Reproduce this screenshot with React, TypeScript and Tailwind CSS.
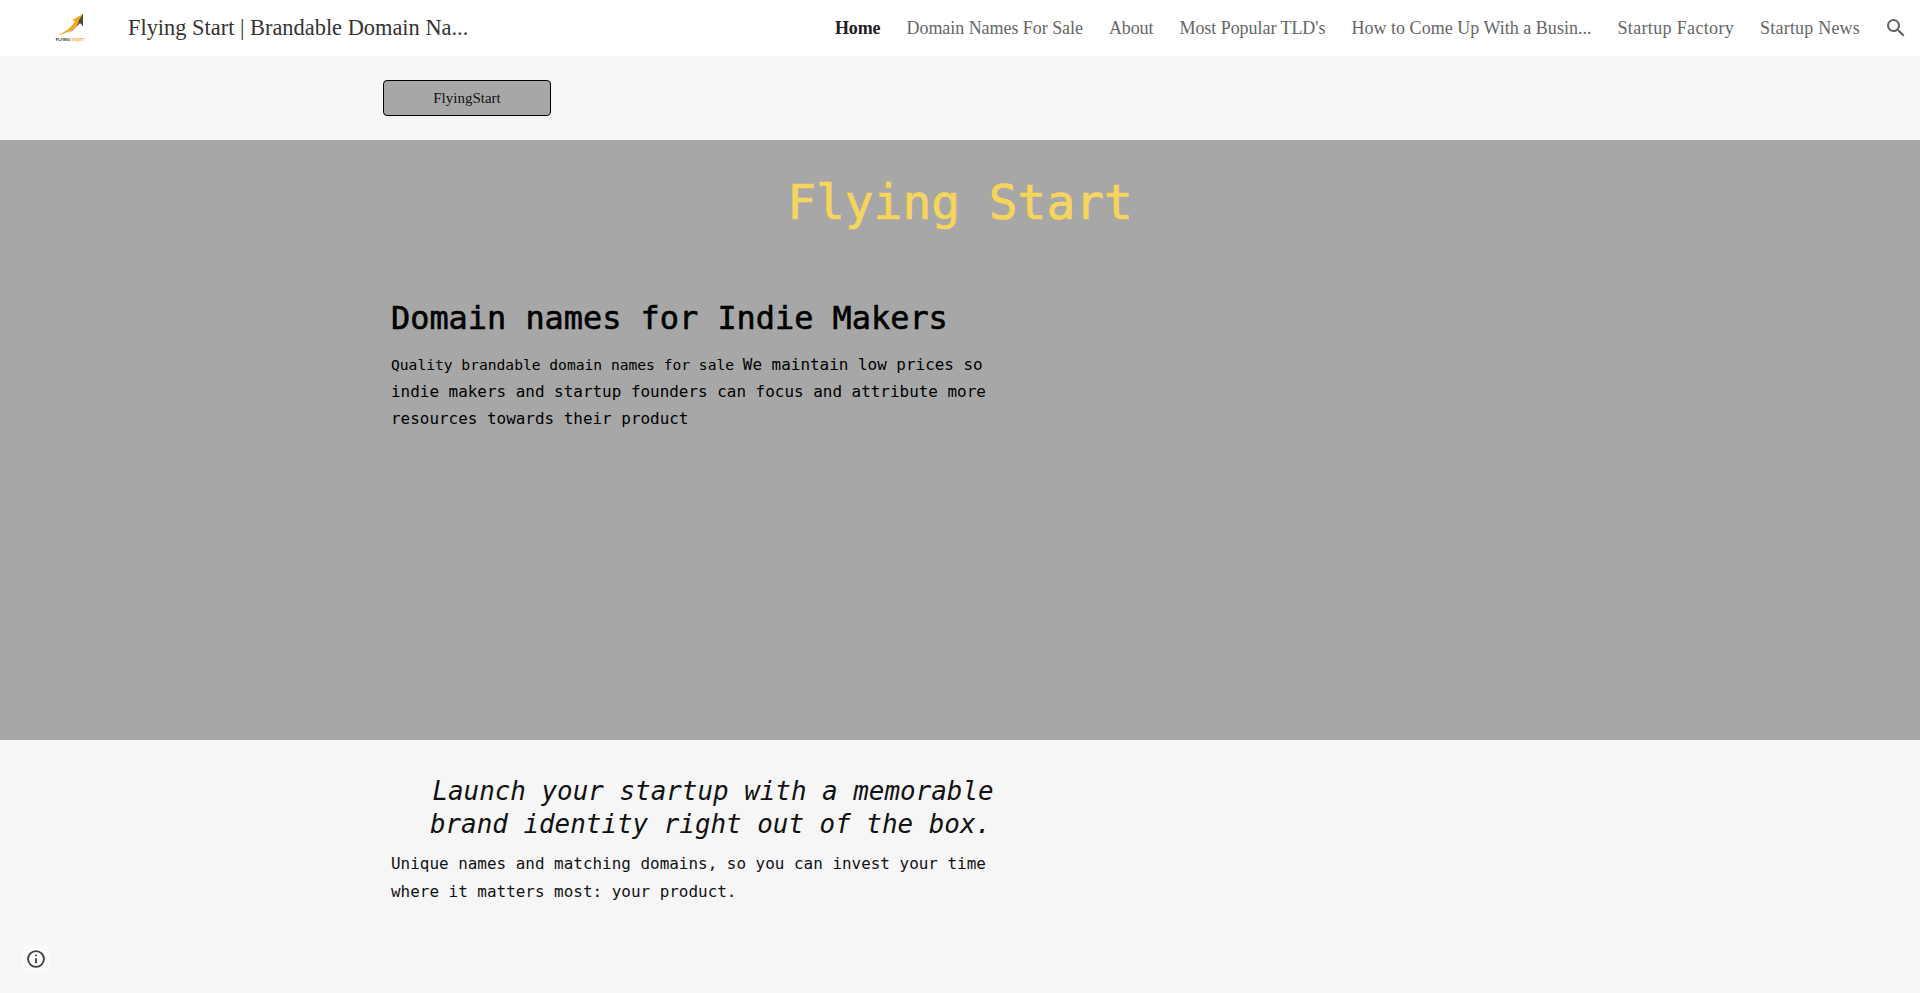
const nav = [
  { label: "Home", cls: "font-bold text-[#212121] tracking-[-0.1px]" },
  { label: "Domain Names For Sale", cls: "tracking-[-0.05px]" },
  { label: "About", cls: "tracking-[-0.1px]" },
  { label: "Most Popular TLD's", cls: "tracking-[-0.05px]" },
  { label: "How to Come Up With a Busin...", cls: "tracking-[0.02px]" },
  { label: "Startup Factory", cls: "tracking-[0.34px]" },
  { label: "Startup News", cls: "tracking-[0.2px]" },
];

function Logo() {
  return (
    <div className="flex w-[32px] flex-col items-center">
      <svg width="28" height="22" viewBox="0 0 28 22">
        <path d="M1 21 C10 18 16 13 19 7 L16 6 L27 0 L27 12 L24 9 C19 15 11 20 1 21 Z" fill="#f2a81d" />
        <path d="M12 19 C18 16 21 12 24 9 L27 12 L27 0 L23 6 C22 12 18 17 12 19 Z" fill="#4a4a4a" />
      </svg>
      <div className="mt-[1px] whitespace-nowrap text-[4px] leading-[5px] font-bold [font-family:'Liberation_Sans',sans-serif]">
        <span className="text-[#333]">FLYING </span>
        <span className="text-[#f2a81d]">START</span>
      </div>
    </div>
  );
}

export default function App() {
  return (
    <div className="relative h-[993px] overflow-hidden bg-[#f6f6f6] [font-family:'DejaVu_Sans_Mono',monospace]">
      <header className="flex h-[56px] items-center bg-white pl-[54px] pr-[12px]">
        <Logo />
        <div className="ml-[42px] text-[22.4px] text-[#333] [font-family:'Liberation_Serif',serif]">
          Flying Start | Brandable Domain Na...
        </div>
        <nav className="ml-auto flex items-center gap-[26px] text-[18px] text-[#666] [font-family:'Liberation_Serif',serif]">
          {nav.map((n) => (
            <span key={n.label} className={n.cls}>{n.label}</span>
          ))}
          <svg width="24" height="24" viewBox="0 0 24 24" fill="#5f6368" className="-ml-[2px]">
            <path d="M15.5 14h-.79l-.28-.27A6.471 6.471 0 0 0 16 9.5 6.5 6.5 0 1 0 9.5 16c1.61 0 3.09-.59 4.23-1.57l.27.28v.79l5 4.99L20.49 19l-4.99-5zm-6 0C7.01 14 5 11.99 5 9.5S7.01 5 9.5 5 14 7.01 14 9.5 11.99 14 9.5 14z" />
          </svg>
        </nav>
      </header>

      <div className="flex h-[84px] items-center pl-[383px]">
        <div className="flex h-[36px] w-[168px] items-center justify-center rounded-[4px] border border-black bg-[#a7a7a7] text-[15px] text-[#111] [font-family:'Liberation_Serif',serif]">
          FlyingStart
        </div>
      </div>

      <section className="h-[600px] bg-[#a7a7a7] pt-[32px]">
        <h1 className="text-center text-[47.85px] leading-[62px] font-normal text-[#f6d55c] [-webkit-text-stroke:0.7px_#f6d55c]">Flying Start</h1>
        <div className="ml-[391px] w-[620px] text-black">
          <h2 className="mt-[63px] text-[31.9px] leading-[42px] font-normal [-webkit-text-stroke:0.6px_#000]">Domain names for Indie Makers</h2>
          <p className="mt-[12px] text-[15.95px] leading-[27px]">
            <span className="text-[14.62px]">Quality brandable domain names for sale </span>
            <span>We maintain low prices so indie makers and startup founders can focus and attribute more resources towards their product</span>
          </p>
        </div>
      </section>

      <section className="ml-[391px] w-[620px] pt-[35px] text-[#111]">
        <h3 className="pl-[19px] text-center text-[25.9px] leading-[33px] font-normal italic">
          <span className="block pl-[5px]">Launch your startup with a memorable</span>
          <span className="block">brand identity right out of the box.</span>
        </h3>
        <p className="mt-[9px] text-[15.95px] leading-[28px]">
          Unique names and matching domains, so you can invest your time where it matters most: your product.
        </p>
      </section>

      <div className="absolute bottom-[20px] left-[22px] flex h-[28px] w-[28px] items-center justify-center rounded-[8px] bg-[#fafafa]">
        <svg width="20" height="20" viewBox="0 0 24 24" fill="none" stroke="#3c4043" strokeWidth="2.2">
          <circle cx="12" cy="12" r="9.5" />
          <path d="M12 11v6" />
          <path d="M12 7v1.6" />
        </svg>
      </div>
    </div>
  );
}
